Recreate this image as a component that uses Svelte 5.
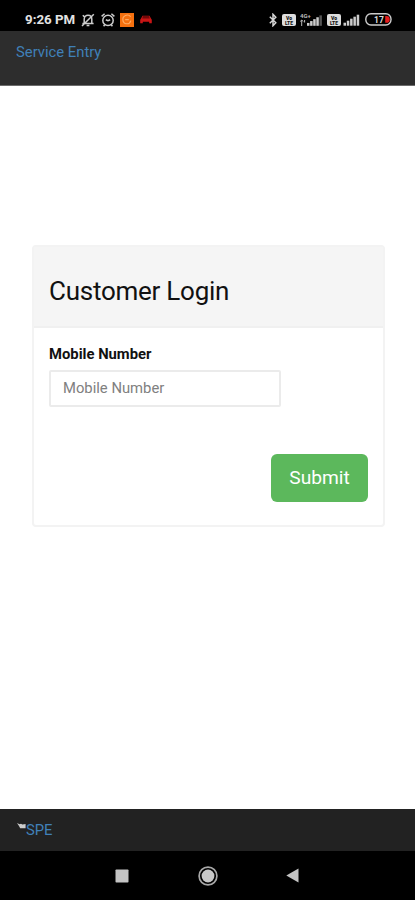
<script lang="ts">
  let mobile = '';
  const battery = 17;
  const bars = [3, 5, 7, 9, 11];
</script>

{#snippet volte()}
  <svg class="volte" width="14" height="12" viewBox="0 0 14 12">
    <rect width="14" height="12" rx="2" fill="#ddd" />
    <text x="7" y="5.7" text-anchor="middle">Vo</text>
    <text x="7" y="10.8" text-anchor="middle">LTE</text>
  </svg>
{/snippet}

<div class="screen">
  <div class="status">
    <span class="time">9:26 PM</span>
    <svg class="bell" width="14" height="14" viewBox="0 0 14 14" fill="none" stroke="#ccc" stroke-width="1.5">
      <path d="M3.2 10V6.2C3.2 3.6 4.8 2.3 7 2.3s3.8 1.3 3.8 3.9V10M1.4 10.4h11.2M5.6 12.5h2.8M1 13L12.8 1.2M1.8 2.2l2.4 2.4" />
    </svg>
    <svg class="alarm" width="14" height="14" viewBox="0 0 14 14" fill="none" stroke="#ccc" stroke-width="1.5">
      <circle cx="7" cy="7.4" r="5.2" />
      <path d="M.6 3.4L3.6.8M13.4 3.4L10.4.8M2.6 13.2l1.3-1.7M11.4 13.2l-1.3-1.7M4.8 6.8L7 7.8l2.2-1" />
    </svg>
    <svg class="app" width="14" height="14" viewBox="0 0 14 14">
      <rect width="14" height="14" fill="#f4700f" />
      <path d="M10.6 3.6A4.4 4.4 0 0 0 2.9 7a4 4 0 0 0 7.9.6M5.2 6.6h3.6" fill="none" stroke="#ffab62" stroke-width="1.2" />
    </svg>
    <svg class="car" width="12" height="9" viewBox="0 0 12 9">
      <path d="M2.5.8h7L11 3.5l.8 1.2V8.3H9.2V6.8H2.8v1.5H.2V4.7L1 3.5z" fill="#c91515" />
      <path d="M3 1h6l.8 2.4H2.2z" fill="#740808" />
    </svg>

    <svg class="bt" width="8" height="14" viewBox="0 0 8 14" fill="none" stroke="#d6d6d6" stroke-width="1.5">
      <path d="M.8 3.8l6 6L4 12.7V1.3l2.8 2.9-6 6" />
    </svg>
    {@render volte()}
    <svg class="data" width="23" height="14" viewBox="0 0 23 14">
      <text x="0" y="5.4">4G+</text>
      <path d="M1.7 13V7.2M.3 8.6l1.4-1.6 1.7 1.6M4.6 7v2.5" fill="none" stroke="#bbb" stroke-width="1" />
      {#each bars as h, i}
        <rect x={7 + i * 3.1} y={12.8 - h * 0.95} width="2.5" height={h * 0.95} fill={i === 4 ? '#555' : '#ccc'} />
      {/each}
    </svg>
    {@render volte()}
    <svg class="signal" width="17" height="12" viewBox="0 0 17 12">
      {#each bars as h, i}
        <rect x={0.5 + i * 3.3} y={11.7 - h} width="2.5" height={h} fill="#ccc" />
      {/each}
    </svg>
    <svg class="battery" width="27" height="13" viewBox="0 0 27 13">
      <rect x=".8" y=".8" width="25.2" height="11.2" rx="5.2" fill="none" stroke="#ccc" stroke-width="1.4" />
      <path d="M20.2 3h1.2a3.4 3.4 0 0 1 0 6.8h-1.2z" fill="#e51c1c" />
      <text x="14" y="9.6" text-anchor="middle">{battery}</text>
    </svg>
  </div>

  <header><a href="#home">Service Entry</a></header>

  <main>
    <form class="card" on:submit|preventDefault>
      <div class="card-head"><h3>Customer Login</h3></div>
      <div class="card-body">
        <label for="mobile">Mobile Number</label>
        <input id="mobile" type="tel" placeholder="Mobile Number" bind:value={mobile} />
        <button type="submit">Submit</button>
      </div>
    </form>
  </main>

  <footer>
    <svg width="9" height="6" viewBox="0 0 9 6">
      <path d="M0 0l2.6 1.2L4 .8l1.4.6L8.6 1v4.2H3.2L2 3z" fill="#ccc" />
    </svg>
    <a href="#spe">SPE</a>
  </footer>

  <nav>
    <svg class="recent" width="14" height="14"><rect x=".5" y=".5" width="13" height="13" rx=".8" fill="#c4c4c4" /></svg>
    <svg class="home" width="20" height="20" viewBox="0 0 20 20">
      <circle cx="10" cy="10" r="8.9" fill="none" stroke="#a8a8a8" stroke-width="1.7" />
      <circle cx="10" cy="10" r="6.4" fill="#c8c8c8" />
    </svg>
    <svg class="back" width="13" height="15" viewBox="0 0 13 15"><path d="M.3 7.5L12.5.4v14.2z" fill="#c4c4c4" /></svg>
  </nav>
</div>

<style>
  :global(body) { margin: 0; background: #fff; }
  .screen {
    display: flex;
    flex-direction: column;
    width: 415px;
    height: 900px;
    overflow: hidden;
    font-family: Roboto, sans-serif;
    font-size: 14.8px;
    color: #111;
  }
  svg { display: block; flex: none; }
  a { color: #4080b8; text-decoration: none; }

  .status {
    display: flex;
    align-items: center;
    box-sizing: border-box;
    height: 31px;
    padding: 8px 23px 0 25px;
    background: #000;
  }
  .time { width: 56px; color: #e2e2e2; font-size: 13.3px; font-weight: 700; white-space: nowrap; }
  .alarm { margin-left: 6px; }
  .app { margin-left: 5px; }
  .car { margin-left: 6px; }
  .bt { margin-left: auto; }
  .volte { margin-left: 5px; }
  .volte text { font-size: 5px; font-weight: 900; fill: #111; }
  .data { margin-left: 4px; }
  .data + .volte { margin-left: 4px; }
  .data text { font-size: 6px; font-weight: 700; fill: #bbb; }
  .signal { margin-left: 2px; }
  .battery { margin-left: 5px; }
  .battery text { font-size: 8.5px; font-weight: 700; fill: #ddd; }

  header {
    box-sizing: border-box;
    height: 55px;
    padding: 13px 16px 0;
    background: #2d2d2d;
    border-bottom: 1px solid #6b6b6b;
    line-height: 17px;
  }

  main { flex: 1; padding: 159px 30px 0 32px; }
  .card {
    box-sizing: border-box;
    height: 282px;
    border: 2px solid #f3f3f3;
    border-radius: 4px;
  }
  .card-head {
    box-sizing: border-box;
    height: 81px;
    padding: 29px 15px 0;
    background: #f5f5f5;
    border-bottom: 2px solid #f0f0f0;
  }
  h3 { margin: 0; font-size: 26px; font-weight: 400; line-height: 31px; letter-spacing: -0.25px; }
  .card-body {
    display: flex;
    flex-direction: column;
    align-items: flex-start;
    padding: 16px 15px 0;
  }
  label { font-weight: 700; line-height: 20px; }
  input {
    box-sizing: border-box;
    width: 232px;
    height: 37px;
    margin: 6px 0 0;
    padding: 0 12px 2px;
    border: 2px solid #ebebeb;
    border-radius: 2px;
    background: #fff;
    font: inherit;
  }
  input::placeholder { color: #808080; }
  button {
    align-self: flex-end;
    width: 97px;
    height: 48px;
    margin: 47px 0 0;
    padding: 0 0 1px;
    border: 0;
    border-radius: 6px;
    background: #5cb85c;
    color: #fff;
    font: 19.2px Roboto, sans-serif;
  }

  footer {
    display: flex;
    align-items: flex-start;
    box-sizing: border-box;
    height: 42px;
    padding: 12px 17px 0;
    background: #222;
    line-height: 18px;
  }
  footer svg { margin-top: 2px; }

  nav {
    display: flex;
    align-items: center;
    height: 49px;
    background: #000;
  }
  .recent { margin-left: 115px; }
  .home { margin-left: 69px; }
  .back { margin-left: 68px; }
</style>
